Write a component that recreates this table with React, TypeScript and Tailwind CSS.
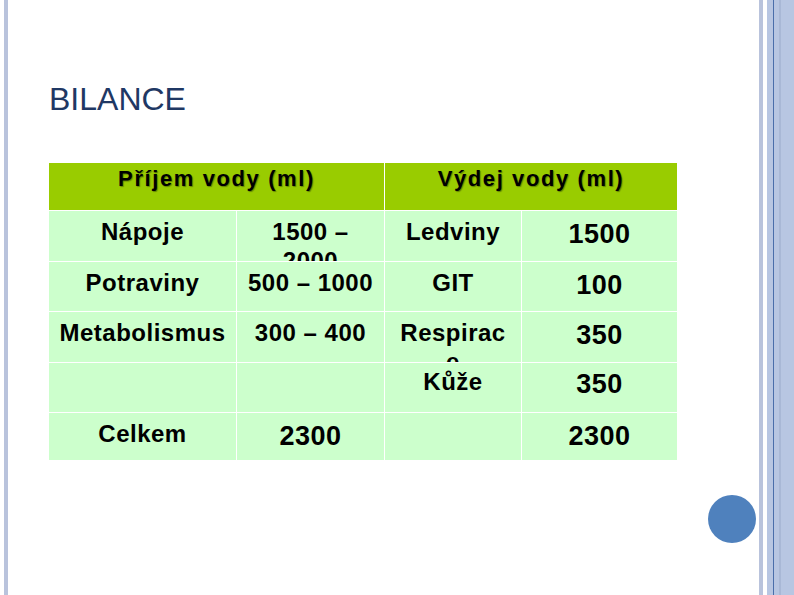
import React from 'react';

const font = "font-['Liberation_Sans',Arial,sans-serif]";

type CellProps = {
  children?: React.ReactNode;
  big?: boolean;
  className?: string;
};

const Cell: React.FC<CellProps> = ({ children, big, className = '' }) => (
  <div
    className={`overflow-hidden bg-[#ccffcc] text-center font-bold text-black whitespace-nowrap ${
      big ? 'pt-[9px] text-[27px] leading-[29px] tracking-[0.5px]' : 'pt-[6px] text-[24px] leading-[29px] tracking-[0.5px]'
    } ${className}`}
  >
    {children}
  </div>
);

const HeaderCell: React.FC<{ children: React.ReactNode }> = ({ children }) => (
  <div className="col-span-2 overflow-hidden bg-[#99cc00] pt-[3px] text-center text-[22px] font-bold leading-[25px] tracking-[1.6px] text-black [text-shadow:1px_1px_1px_rgba(0,0,0,0.35)]">
    {children}
  </div>
);

export default function App() {
  return (
    <div className={`relative flex h-[595px] w-[794px] overflow-hidden bg-white ${font}`}>
      {/* left frame stripe */}
      <div className="ml-[4px] h-full w-[4px] bg-[#b9c3dc]" />

      <div className="flex flex-1 flex-col pl-[41px]">
        <h1 className="mt-[83px] text-[32px] font-normal leading-[32px] text-[#1f3864]">BILANCE</h1>

        <div className="mt-[48px] grid w-[628px] grid-cols-[187px_147px_136px_155px] grid-rows-[47px_50px_49px_50px_49px_47px] gap-px bg-white">
          <HeaderCell>Příjem vody (ml)</HeaderCell>
          <HeaderCell>Výdej vody (ml)</HeaderCell>

          <Cell>Nápoje</Cell>
          <Cell>
            1500 –<br />2000
          </Cell>
          <Cell>Ledviny</Cell>
          <Cell big>1500</Cell>

          <Cell>Potraviny</Cell>
          <Cell>500 – 1000</Cell>
          <Cell>GIT</Cell>
          <Cell big>100</Cell>

          <Cell>Metabolismus</Cell>
          <Cell>300 – 400</Cell>
          <Cell>
            Respirac<br />e
          </Cell>
          <Cell big>350</Cell>

          <Cell />
          <Cell />
          <Cell className="!pt-[4px]">Kůže</Cell>
          <Cell big className="!pt-[7px]">350</Cell>

          <Cell>Celkem</Cell>
          <Cell big>2300</Cell>
          <Cell />
          <Cell big>2300</Cell>
        </div>
      </div>

      {/* right frame stripes */}
      <div className="flex h-full">
        <div className="w-[4px] bg-[#b9c3dc]" />
        <div className="w-[4px] bg-white" />
        <div className="w-[6px] bg-[#b8c6e2]" />
        <div className="w-px bg-[#4a6eaa]" />
        <div className="w-[5px] bg-[#b8c6e2]" />
        <div className="w-[2px] bg-[#a9b8d6]" />
        <div className="w-[13px] bg-[#b8c6e2]" />
      </div>

      {/* blue dot */}
      <div className="absolute left-[708px] top-[495px] h-[48px] w-[48px] rounded-full bg-[#4f81bd]" />
    </div>
  );
}
